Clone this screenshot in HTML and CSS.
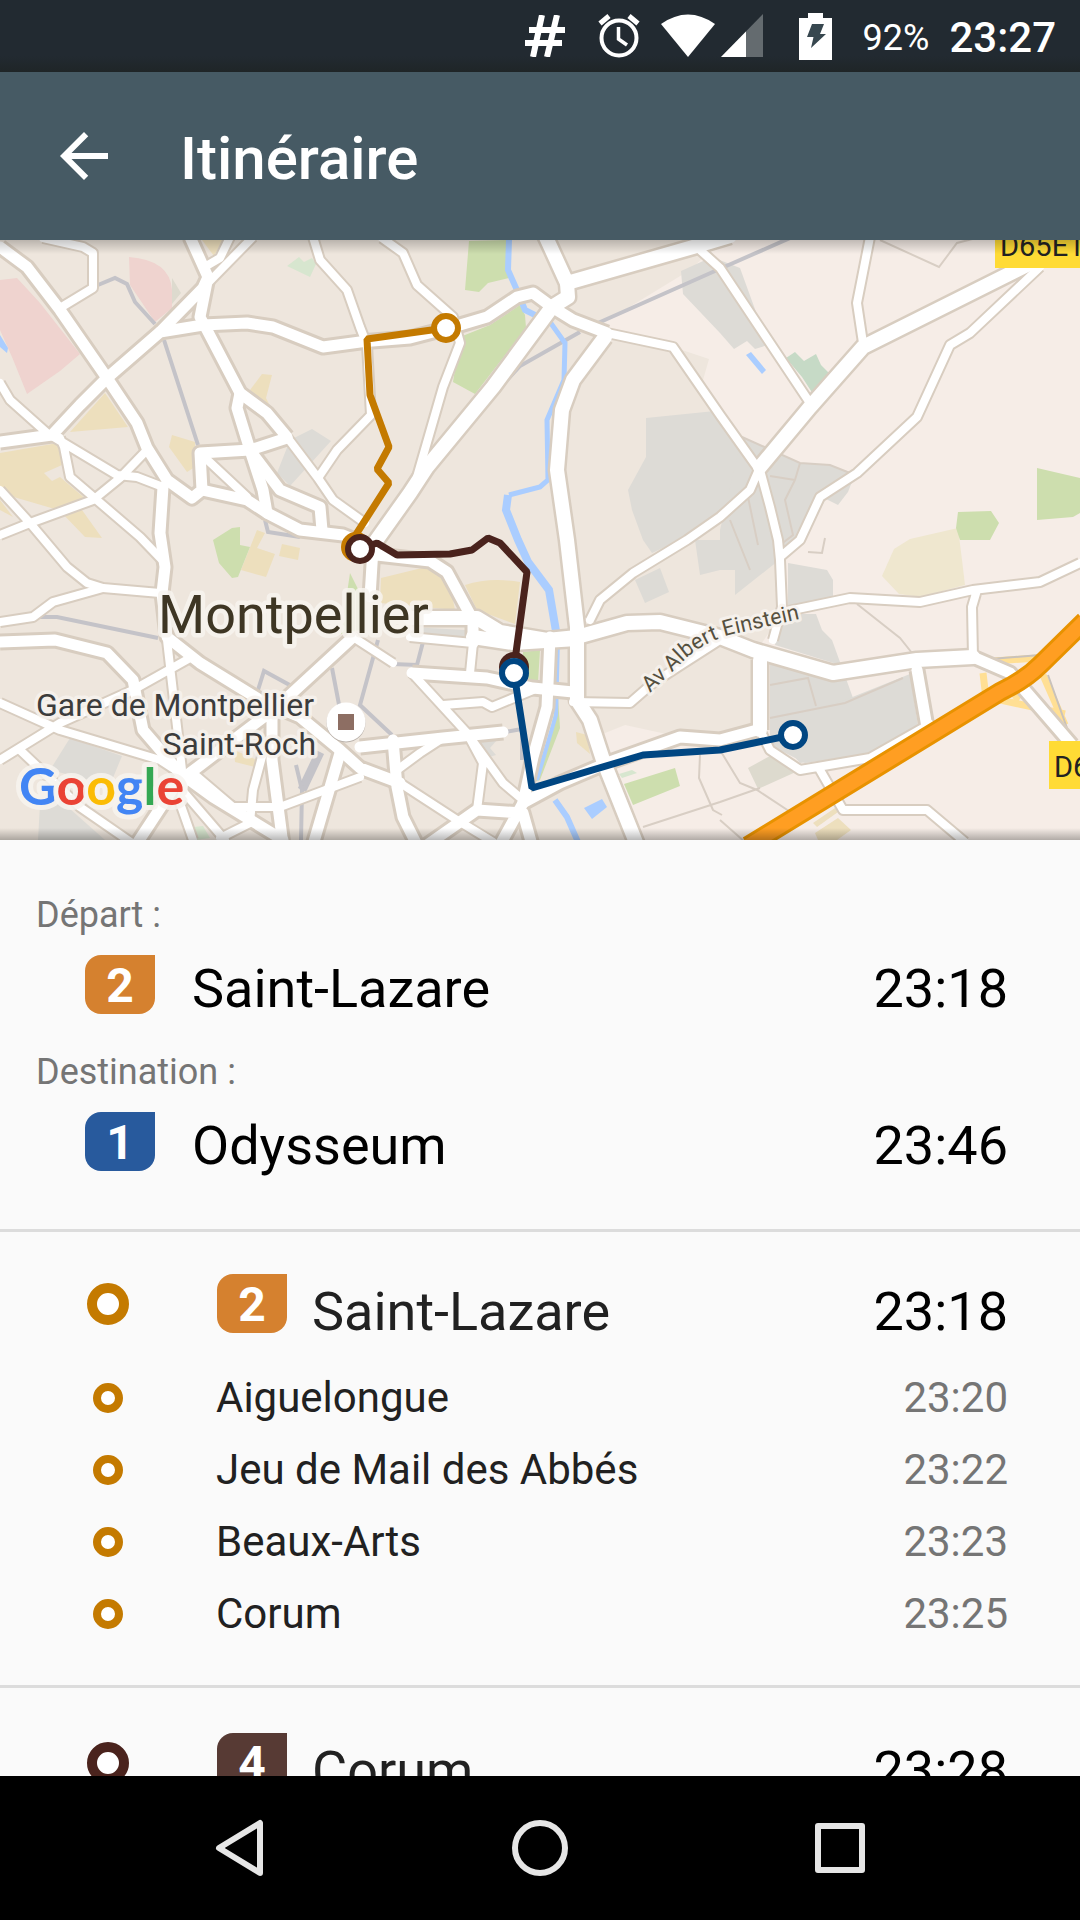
FILE: index.html
```html
<!DOCTYPE html>
<html lang="fr">
<head>
<meta charset="utf-8">
<meta name="viewport" content="width=device-width, initial-scale=1">
<title>Itinéraire</title>
<link rel="stylesheet" href="styles.css">
</head>
<body>
<div class="status-bar">
  <svg class="icon-hash" width="40" height="42" viewBox="0 0 40 42" aria-hidden="true"><path d="M17 0L8 42M32 0L22 42M4 15H40M0 28H37" fill="none" stroke="#fff" stroke-width="6"/></svg>
  <svg class="icon-alarm" width="42" height="44" viewBox="0 0 42 44" aria-hidden="true"><g fill="none" stroke="#fff"><circle cx="21" cy="24" r="17.5" stroke-width="4"/><path d="M2 9.500L11 2M40 9.500L31 2" stroke-width="5"/><path d="M20.500 13V25L29 31" stroke-width="3.500"/></g></svg>
  <svg class="icon-wifi" width="54" height="44" viewBox="0 0 54 44" aria-hidden="true"><path d="M0 10Q27-9 54 10L27 43Z" fill="#fff"/></svg>
  <svg class="icon-signal" width="42" height="44" viewBox="0 0 42 44" aria-hidden="true"><path d="M42 0V43H0Z" fill="#646b6f"/><path d="M25 17.500V43H0Z" fill="#fff"/></svg>
  <svg class="icon-battery" width="34" height="48" viewBox="0 0 34 48" aria-hidden="true"><path d="M9 1H24V6H33V48H0V6H9Z" fill="#fff"/><path d="M13 12H25L21 22H27L12 36L14.500 25H8Z" fill="#37474f"/></svg>
  <span class="charge">92%</span>
  <span class="clock">23:27</span>
</div>

<header class="app-bar">
  <button class="back" type="button" aria-label="Retour"><svg width="72" height="72" viewBox="0 0 24 24"><path d="M20 11H7.830l5.590-5.590L12 4l-8 8 8 8 1.410-1.410L7.830 13H20v-2z" fill="#fff"/></svg></button>
  <h1>Itinéraire</h1>
</header>

<div class="map">
<svg viewBox="0 240 1080 600" preserveAspectRatio="xMidYMid slice" role="img" aria-label="Carte de Montpellier">
  <defs>
    <g id="major">
      <path d="M0 247L27 267L60 310L107 378L137 423L147 448L167 480L192 498L202 490L200 453L250 450L287 438"/>
      <path d="M0 442L52 435L80 405L107 378L137 352L160 332L203 325L247 323L273 327L323 347L360 342L410 338L460 325L487 317L517 297L533 293L552 307L573 320L607 333"/>
      <path d="M160 332L203 288L208 277L190 237M208 277L200 317L207 330L240 393L267 413L287 437"/>
      <path d="M240 393L237 408L250 450L263 490L267 513L300 530L343 535L375 548"/>
      <path d="M252 453L280 490L320 507L322 530M202 490L247 500L267 513"/>
      <path d="M163 487L160 533L165 567L162 593L167 637L200 663L260 700L300 717L340 750L360 768L400 783"/>
      <path d="M0 642L55 640L107 653L133 680L143 730L180 773L213 797L283 840"/>
      <path d="M190 773L277 707L353 637M340 753L313 845M272 713L272 760L283 845M180 778L136 845"/>
      <path d="M373 548L370 597M377 555L430 561L447 572L473 620L473 643M393 740L397 787L403 817L417 845"/>
      <path d="M412 673L487 678L533 688L573 692M360 747L443 738L503 732M477 810L427 845M477 810L523 813L532 845M523 803L500 845"/>
      <path d="M550 637L547 707L533 757L523 803L560 783L607 763L680 737L720 740L757 730"/>
      <path d="M927 727L917 670M973 657L1010 673L1072 745"/>
    </g>
    <g id="trunk">
      <path d="M545 235L567 283L568 297L552 307L493 387L427 467L410 493L373 545"/>
      <path d="M567 283L693 247L730 236M605 337L573 380L562 410L557 470L567 540L577 627L577 700L590 720L603 760L637 845"/>
      <path d="M410 618L477 618L500 632L547 640L577 637L627 623L660 622L720 637L753 650L833 673L917 660L973 657"/>
      <path d="M473 637L513 643L577 639M760 660L760 730M1053 252L1013 272L863 347L810 407L760 467"/>
    </g>
    <g id="minor">
      <path d="M43 238L83 247L93 253L93 288L60 308M230 237L220 258L208 265M253 237L203 288"/>
      <path d="M200 453L247 497M0 383L10 400L47 433L117 475L137 477L163 487M60 438L64 447L70 477L140 537L165 563"/>
      <path d="M0 535L30 523L93 500L120 478L147 450M0 490L30 523L67 567L87 583L103 588L160 593"/>
      <path d="M287 437L318 478L333 500L365 523M313 237L320 260L347 290L360 327L367 345L371 415L337 450L318 478"/>
      <path d="M382 238L403 253L417 285L453 317L460 343L443 387L417 477M607 333L673 347L720 415L757 467M700 250L720 268L810 403M870 237L857 303L863 343"/>
      <path d="M1040 267L970 333L950 345L917 417L857 473L820 497L800 540L780 557M760 470L770 507L778 540L780 560L782 607L773 640M760 467L750 490L720 517L687 540L633 573L600 600L590 620"/>
      <path d="M0 622L33 617L53 602L103 588M0 703L60 730L160 760L180 773M0 760L60 723L133 690L190 658M167 640L182 770M353 637L393 663M410 637L473 643L470 673"/>
      <path d="M263 753L253 790L250 823L220 838M193 773L233 807L280 807L360 777M185 780L180 803L193 840M182 790L225 840M20 750L80 807L135 845"/>
      <path d="M412 673L467 733L503 783L523 800M443 705L483 702L492 707L533 690M397 770L420 753L440 740M467 733L483 763L477 810M400 783L457 820L493 842"/>
      <path d="M573 702L630 703L653 683L720 640M760 730L770 750L800 770L870 758L930 724M783 612L850 598L920 602L973 590L1040 582L1080 563M977 590L972 607L973 657M820 770L843 810L927 810L965 842"/>
    </g>
  </defs>
  <path d="M0 240H1080V840H0Z" fill="#eee6dd"/>
  <path d="M722 240H1080V840H637L603 760L600 735L625 725L680 737L757 730V650L783 612L770 540L757 467L703 380L709 359L673 347L600 325L690 270Z" fill="#f6ede7"/>

  <path d="M0 280L17 278L40 303L80 354L60 371L27 394L12 357L0 330ZM129 257Q170 260 172 290V308L155 322L130 285Z" fill="#efd3cf"/>
  <g fill="#eddfbd">
    <path d="M105 393L128 427L70 432ZM202 240H223L214 256ZM250 390L262 374L272 375L266 398L271 408ZM169 447L172 435L195 442L195 467L187 472ZM0 453L58 443L62 465L44 473L52 481L60 477L87 500L65 512L0 493Z"/>
    <path d="M0 500L13 517L0 510ZM60 511L82 510L102 538L85 537ZM257 530L265 533L257 548L275 554L266 577L241 570ZM282 544L300 548L298 560L279 556ZM381 578L430 566L450 585L455 610L380 603ZM465 585Q490 577 520 582L515 624L477 610ZM234 750L257 760L255 767L235 762ZM576 732L587 735L590 754L577 743Z"/>
    <path d="M815 833L838 818L851 830L837 840H818ZM813 823L835 808L838 812L817 827Z"/>
  </g>
  <path d="M882 576L894 549L910 539L958 528L962 560L965 585L920 597L899 594Z" fill="#efe7cf"/>
  <g fill="#dddbd6">
    <path d="M290 440L312 429L331 441L290 486L277 473ZM681 271L712 257L740 268L768 345L755 349L747 341L734 349L720 333L683 294ZM646 418L715 411L757 467L720 517L680 545L643 540L632 510L628 490L646 457Z"/>
    <path d="M742 437L800 463L830 465L855 474L848 492L838 505L826 499L800 543L783 557L735 595V570L720 570V530ZM788 563L827 570L833 580V600L788 608ZM780 614H816L822 630L832 640L853 698L860 755L805 763L770 745V665H840L775 645Z"/>
    <path d="M910 674L918 725L870 753L800 763L775 735V720L845 700ZM643 540H680L652 553ZM635 580L660 568L669 592L645 603ZM695 540H720V570L700 575ZM70 738L122 756L110 785L50 770ZM40 805L60 800L105 840H38ZM410 627L465 630V636L412 636ZM480 742L497 740L490 748L496 755L486 758Z"/>
  </g>
  <g fill="#cddeae">
    <path d="M469 241L508 240L509 278L488 283L479 292L465 290ZM520 305L525 315L526 328L475 394L453 382L460 337L490 325ZM213 540L232 528L240 527V545L250 547L238 577L232 578L219 563ZM1037 468L1080 478V513L1073 517L1037 520ZM958 512L991 511L999 523L990 540H960L956 528ZM523 652L540 650L538 682L523 680ZM624 784L675 768L680 786L633 805ZM350 573L361 595L360 630L341 634Z"/>
    <path d="M558 697L560 728L540 780L533 782L548 740Z"/>
  </g>
  <path d="M786 358L795 352L804 361L816 354L821 365L832 376L815 397L802 377Z" fill="#c6dac6"/>
  <path d="M287 266L299 257L304 262L312 258L316 264L310 277ZM194 827L203 826L210 838L195 840ZM619 774L632 770L637 773L622 778Z" fill="#d7e6cf"/>
  <path d="M748 768L770 756L798 771L758 789ZM172 278L181 293L172 304Z" fill="#dddace"/>

  <g fill="none" stroke="#d8cec4" stroke-width="2">
    <path d="M742 437L800 463L830 465L855 475M800 463L795 480L785 500L793 535L780 545M770 476L795 480M748 497L758 545M730 520L750 570M880 240L939 267L957 243L980 237"/>
    <path d="M770 685L808 678L816 706M770 718L845 703L903 678M857 604L900 638L912 653M700 755L699 778L713 810L722 815M643 827L720 802L760 788M720 750L740 783L757 790L795 815M720 820L745 842M808 552L822 553L825 538"/>
  </g>
  <g fill="none" stroke="#c4c3c8" stroke-width="4">
    <path d="M98 285L115 278L127 284L135 302L155 324M164 340L198 445M498 390L520 366L580 332M598 323L715 271L790 238M265 520L268 532L300 537M40 617H57L158 638M258 690L264 671L295 688L285 712L310 730M332 668L341 715M378 640L360 705L392 735M423 642L417 665L392 664M505 732L522 729V760"/>
    <path d="M320 752L302 790" stroke-width="9"/><path d="M296 765L302 790L301 840"/>
  </g>
  <g fill="none" stroke="#aacdff">
    <path d="M509 240L508 270L516 288L525 310L535 315" stroke-width="6"/>
    <path d="M550 322L565 343L564 380L547 420L548 480L540 487L509 495" stroke-width="5"/>
    <path d="M508 495L506 510L518 540L528 562L549 590L557 637" stroke-width="8"/>
    <path d="M558 640L556 715L537 780" stroke-width="4"/>
    <path d="M555 800L567 817L578 842" stroke-width="6"/>
  </g>
  <path d="M0 335L8 348L7 353L0 347ZM746 355L751 352L766 370L762 374ZM584 808L602 799L607 807L592 819Z" fill="#aacdff"/>

  <g fill="none" stroke="#ffdf94" stroke-width="7">
    <path d="M980 662L1037 658M983 673L985 690L1000 700L1065 714M1043 675L1065 725M1015 700L1025 685"/>
    <path d="M1048 675L1067 728M978 660L1040 655" stroke="#c9c2bb" stroke-width="2"/>
  </g>
  <g fill="none" stroke="#d8cdc0" stroke-linejoin="round">
    <use href="#minor" stroke-width="12"/><use href="#major" stroke-width="17"/><use href="#trunk" stroke-width="19"/>
  </g>
  <g fill="none" stroke="#fff" stroke-linejoin="round" stroke-linecap="round">
    <use href="#minor" stroke-width="8"/><use href="#major" stroke-width="11"/><use href="#trunk" stroke-width="14"/>
  </g>
  <g fill="none">
    <path d="M748 846L1000 692Q1025 680 1040 665L1085 621" stroke="#e89200" stroke-width="20"/>
    <path d="M748 846L1000 692Q1025 680 1040 665L1085 621" stroke="#ff9e22" stroke-width="14"/>
  </g>

  <path d="M995 236H1080V268H995ZM1049 741H1080V789H1049Z" fill="#ffdb35"/>
  <g class="road-number"><text x="1000" y="256">D65E1</text><text x="1054" y="777">D6</text></g>

  <path id="avenue" d="M650 693L690 655Q712 638 738 633L830 612" fill="none"/>
  <text class="street"><textPath href="#avenue">Av Albert Einstein</textPath></text>
  <circle cx="346" cy="723" r="19.500" fill="#b9b1aa"/><circle cx="346" cy="722" r="19.500" fill="#fff"/>
  <path d="M338 714H354V730H338Z" fill="#8d6e63"/>
  <text class="city" x="158" y="633">Montpellier</text>
  <g class="station"><text x="314" y="716">Gare de Montpellier</text><text x="316" y="755">Saint-Roch</text></g>
  <text class="brand" x="19" y="805"><tspan fill="#4285f4">G</tspan><tspan fill="#ea4335">o</tspan><tspan fill="#fbbc05">o</tspan><tspan fill="#4285f4">g</tspan><tspan fill="#34a853">l</tspan><tspan fill="#ea4335">e</tspan></text>

  <g fill="none" stroke-width="7" stroke-linejoin="bevel">
    <path d="M446 328L367 339L370 395L389 447L377 469L389 483L355 536V547" stroke="#c47a00"/>
    <circle cx="446" cy="328" r="12" fill="#fff" stroke="#c47a00" stroke-width="6"/>
    <circle cx="356" cy="547" r="12" fill="#fff" stroke="#c47a00" stroke-width="6"/>
    <path d="M360 549L377 543L397 555L450 554L472 550L488 538L500 543L527 572L515 660" stroke="#4a231d"/>
    <circle cx="360" cy="549" r="12" fill="#fff" stroke="#4a231d" stroke-width="6"/>
    <circle cx="514" cy="667" r="12" fill="#fff" stroke="#4a231d" stroke-width="6"/>
    <path d="M514 673L532 788L643 755L720 750L792 735" stroke="#004682"/>
    <circle cx="514" cy="673" r="12" fill="#fff" stroke="#004682" stroke-width="6"/>
    <circle cx="793" cy="735" r="12" fill="#fff" stroke="#004682" stroke-width="6"/>
  </g>
</svg>
</div>

<main class="trip">
  <section class="summary">
    <h2>Départ :</h2>
    <div class="stop"><span class="line line-2">2</span><span class="name">Saint-Lazare</span><time>23:18</time></div>
    <h2>Destination :</h2>
    <div class="stop"><span class="line line-1">1</span><span class="name">Odysseum</span><time>23:46</time></div>
  </section>
  <section class="leg leg-gold">
    <div class="leg-head"><span class="ring"></span><span class="line line-2">2</span><span class="name">Saint-Lazare</span><time>23:18</time></div>
    <ul>
      <li><span class="ring"></span><span class="name">Aiguelongue</span><time>23:20</time></li>
      <li><span class="ring"></span><span class="name">Jeu de Mail des Abbés</span><time>23:22</time></li>
      <li><span class="ring"></span><span class="name">Beaux-Arts</span><time>23:23</time></li>
      <li><span class="ring"></span><span class="name">Corum</span><time>23:25</time></li>
    </ul>
  </section>
  <section class="leg leg-brown">
    <div class="leg-head"><span class="ring"></span><span class="line line-4">4</span><span class="name">Corum</span><time>23:28</time></div>
  </section>
</main>

<nav class="nav-bar">
  <button type="button" aria-label="Précédent"><svg width="60" height="60" viewBox="0 0 60 60"><path d="M50 5V55L9 30Z" fill="none" stroke="#e6e6e6" stroke-width="6" stroke-linejoin="round"/></svg></button>
  <button type="button" aria-label="Accueil"><svg width="60" height="60" viewBox="0 0 60 60"><circle cx="30" cy="30" r="25" fill="none" stroke="#e6e6e6" stroke-width="6"/></svg></button>
  <button type="button" aria-label="Applications récentes"><svg width="60" height="60" viewBox="0 0 60 60"><rect x="8" y="8" width="44" height="44" fill="none" stroke="#e6e6e6" stroke-width="6" stroke-linejoin="round"/></svg></button>
</nav>
</body>
</html>
```
FILE: styles.css
```css
* {
  box-sizing: border-box;
}

body {
  margin: 0;
  height: 100vh;
  display: flex;
  flex-direction: column;
  background: #fafafa;
  color: #212121;
  font-family: Roboto, "Liberation Sans", sans-serif;
}

button {
  padding: 0;
  border: 0;
  background: none;
  display: flex;
  align-items: center;
  justify-content: center;
}

svg {
  display: block;
}

h1,
h2,
ul {
  margin: 0;
  padding: 0;
  font-weight: 400;
  list-style: none;
}

/* System status bar */

.status-bar {
  flex: none;
  height: 72px;
  padding-right: 24px;
  display: flex;
  align-items: center;
  justify-content: flex-end;
  background: linear-gradient(#222a31 56px, #1f2527);
  color: #fff;
}

.icon-alarm {
  margin-left: 33px;
}

.icon-wifi {
  margin-left: 21px;
}

.icon-signal {
  margin-left: 6px;
}

.icon-battery {
  margin-left: 36px;
}

.charge {
  margin-left: 30px;
  font-size: 36px;
  line-height: 72px;
  padding-top: 3px;
}

.clock {
  margin-left: 20px;
  font-size: 42px;
  font-weight: 500;
  line-height: 72px;
  padding-top: 3px;
}

/* App bar */

.app-bar {
  flex: none;
  height: 168px;
  padding: 0 48px;
  display: flex;
  align-items: center;
  gap: 60px;
  background: #465a64;
  color: #fff;
}

.app-bar h1 {
  padding-top: 4px;
  font-size: 60px;
  font-weight: 500;
}

/* Map */

.map {
  flex: none;
  position: relative;
  height: 600px;
}

.map svg {
  width: 100%;
  height: 100%;
}

.map::after {
  content: "";
  position: absolute;
  inset: 0;
  background:
    linear-gradient(rgba(0, 0, 0, 0.22), transparent) top / 100% 14px no-repeat,
    linear-gradient(transparent, rgba(0, 0, 0, 0.28)) bottom / 100% 12px no-repeat;
  pointer-events: none;
}

.road-number {
  font-size: 29px;
  fill: #222;
}

.street,
.city,
.station,
.brand {
  stroke: rgba(247, 243, 238, 0.85);
  stroke-linejoin: round;
  paint-order: stroke;
}

.street {
  font-size: 22px;
  fill: #55503f;
  stroke-width: 6px;
}

.city {
  font-size: 54px;
  fill: #3e3624;
  stroke-width: 9px;
}

.station {
  font-size: 32px;
  fill: #3c3c3c;
  stroke-width: 7px;
  text-anchor: end;
}

.brand {
  font-family: Lato, sans-serif;
  font-size: 52px;
  font-weight: 700;
  stroke-width: 10px;
}

/* Trip details */

.trip {
  flex: 1;
  min-height: 0;
  overflow-y: auto;
  scrollbar-width: none;
}

.name {
  flex: 1;
}

.line {
  flex: none;
  width: 70px;
  height: 59px;
  border-radius: 16px 0 16px 16px;
  color: #fff;
  font-size: 48px;
  font-weight: 700;
  line-height: 61px;
  text-align: center;
}

.line-1 {
  background: #285a9d;
}

.line-2 {
  background: #d5812f;
}

.line-4 {
  background: #573a34;
}

.summary {
  padding: 53px 72px 49px 36px;
}

.summary h2 {
  color: #757575;
  font-size: 36px;
  line-height: 44px;
}

.stop {
  margin-top: 18px;
  padding-left: 49px;
  display: flex;
  gap: 37px;
  color: #000;
  font-size: 54px;
  line-height: 68px;
}

.stop + h2 {
  margin-top: 27px;
}

.leg {
  padding: 42px 72px 35px 84px;
  border-top: 3px solid #dcdcdc;
}

.leg + .leg {
  padding-top: 45px;
}

.leg-gold {
  --ring: #c47a00;
}

.leg-brown {
  --ring: #4a231d;
}

.ring {
  flex: none;
  border: 8px solid var(--ring);
  border-radius: 50%;
  width: 30px;
  height: 30px;
  margin: 0 9px;
  background: #fff;
}

.leg-head {
  display: flex;
  font-size: 54px;
  line-height: 76px;
}

.leg-head .ring {
  width: 42px;
  height: 42px;
  margin: 9px 88px 9px 3px;
  border-width: 10px;
}

.leg-head .name {
  margin-left: 25px;
}

.leg-head time {
  color: #000;
}

.leg ul {
  padding-top: 12px;
}

.leg li {
  display: flex;
  align-items: center;
  gap: 84px;
  font-size: 42px;
  line-height: 72px;
}

.leg li time {
  color: #757575;
}

/* System navigation */

.nav-bar {
  flex: none;
  height: 144px;
  padding: 0 90px;
  display: grid;
  grid-template-columns: repeat(3, 1fr);
  background: #000;
}
```
